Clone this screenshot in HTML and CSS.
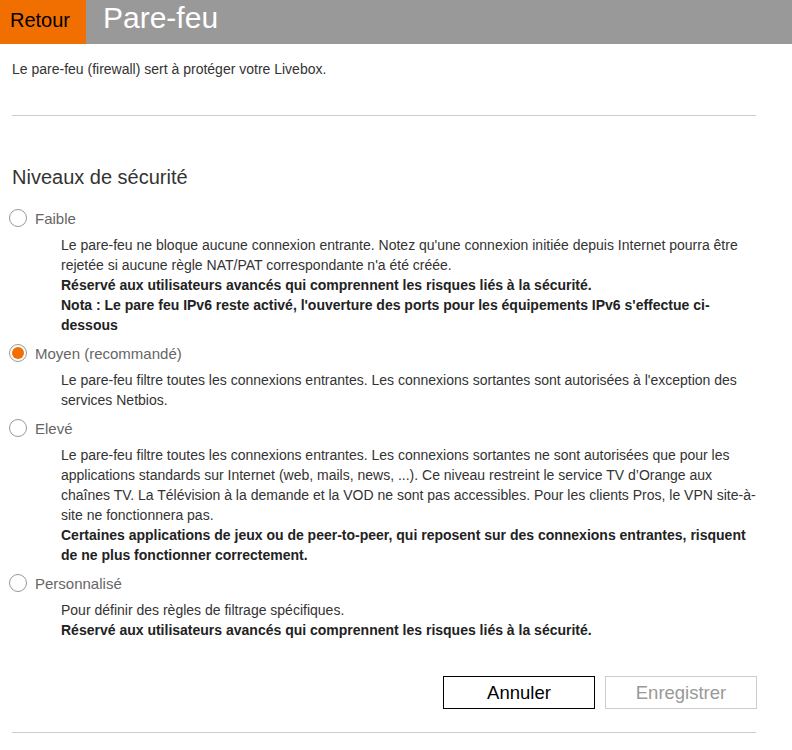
FILE: index.html
```html
<!DOCTYPE html>
<html lang="fr">
<head>
    <meta charset="UTF-8">
    <meta name="viewport" content="width=device-width, initial-scale=1.0">
    <link rel="stylesheet" href="styles.css">
    <title>Pare-feu</title>
</head>
<body>
    <div class="top-bar">
        <div class="back-button">Retour</div>
        <div class="page-title">Pare-feu</div>
    </div>

    <div class="content">
        <p class="intro">Le pare-feu (firewall) sert à protéger votre Livebox.</p>
        <hr class="separator">

        <h2 class="section-title">Niveaux de sécurité</h2>

        <div class="level">
            <div class="level-row"><span class="radio"></span><span class="level-name">Faible</span></div>
            <div class="level-desc">
                Le pare-feu ne bloque aucune connexion entrante. Notez qu'une connexion initiée depuis Internet pourra être rejetée si aucune règle NAT/PAT correspondante n'a été créée.<br>
                <b>Réservé aux utilisateurs avancés qui comprennent les risques liés à la sécurité.</b><br>
                <b>Nota : Le pare feu IPv6 reste activé, l'ouverture des ports pour les équipements IPv6 s'effectue ci-dessous</b>
            </div>
        </div>

        <div class="level">
            <div class="level-row"><span class="radio checked"></span><span class="level-name">Moyen (recommandé)</span></div>
            <div class="level-desc">
                Le pare-feu filtre toutes les connexions entrantes. Les connexions sortantes sont autorisées à l'exception des services Netbios.
            </div>
        </div>

        <div class="level">
            <div class="level-row"><span class="radio"></span><span class="level-name">Elevé</span></div>
            <div class="level-desc">
                Le pare-feu filtre toutes les connexions entrantes. Les connexions sortantes ne sont autorisées que pour les applications standards sur Internet (web, mails, news, ...). Ce niveau restreint le service TV d’Orange aux chaînes TV. La Télévision à la demande et la VOD ne sont pas accessibles. Pour les clients Pros, le VPN site-à-site ne fonctionnera pas.<br>
                <b>Certaines applications de jeux ou de peer-to-peer, qui reposent sur des connexions entrantes, risquent de ne plus fonctionner correctement.</b>
            </div>
        </div>

        <div class="level">
            <div class="level-row"><span class="radio"></span><span class="level-name">Personnalisé</span></div>
            <div class="level-desc">
                Pour définir des règles de filtrage spécifiques.<br>
                <b>Réservé aux utilisateurs avancés qui comprennent les risques liés à la sécurité.</b>
            </div>
        </div>

        <div class="actions">
            <button class="btn btn-cancel">Annuler</button>
            <button class="btn btn-save" disabled>Enregistrer</button>
        </div>
        <hr class="separator bottom">
    </div>
</body>
</html>
```

FILE: styles.css
```css
body {
    margin: 0;
    font-family: "Liberation Sans", Arial, sans-serif;
    color: #333;
    background-color: #fff;
}

.top-bar {
    display: flex;
    height: 44px;
    background-color: #999;
}

.back-button {
    width: 86px;
    box-sizing: border-box;
    padding-left: 10px;
    background-color: #f16e00;
    color: #000;
    font-size: 20px;
    line-height: 40px;
}

.page-title {
    padding-left: 17px;
    color: #fff;
    font-size: 30px;
    line-height: 36px;
}

.content {
    width: 744px;
    margin-left: 12px;
}

.intro {
    margin: 15px 0 36px;
    font-size: 14px;
    line-height: 20px;
}

.separator {
    margin: 0;
    border: none;
    border-top: 1px solid #ccc;
}

.section-title {
    margin: 49px 0 17px;
    font-size: 20px;
    font-weight: normal;
    line-height: 24px;
}

.level {
    margin-bottom: 6px;
}

.level-row {
    display: flex;
    align-items: center;
    height: 24px;
}

.radio {
    position: relative;
    width: 16px;
    height: 16px;
    margin-left: -3px;
    margin-right: 8px;
    border: 1px solid #999;
    border-radius: 50%;
    background-color: #fff;
}

.radio.checked::after {
    content: "";
    position: absolute;
    top: 2px;
    left: 2px;
    width: 12px;
    height: 12px;
    border-radius: 50%;
    background-color: #f16e00;
}

.level-name {
    color: #666;
    font-size: 15px;
}

.level-desc {
    margin: 5px 0 0 49px;
    font-size: 14px;
    line-height: 20px;
}

.level-desc b {
    color: #222;
}

.actions {
    display: flex;
    justify-content: flex-end;
    gap: 10px;
    margin: 36px -1px 23px 0;
}

.btn {
    width: 152px;
    height: 33px;
    font-family: "Liberation Sans", Arial, sans-serif;
    font-size: 18.5px;
    background-color: #fff;
}

.btn-cancel {
    border: 1px solid #000;
    color: #000;
}

.btn-save {
    border: 1px solid #ccc;
    color: #999;
}
```
